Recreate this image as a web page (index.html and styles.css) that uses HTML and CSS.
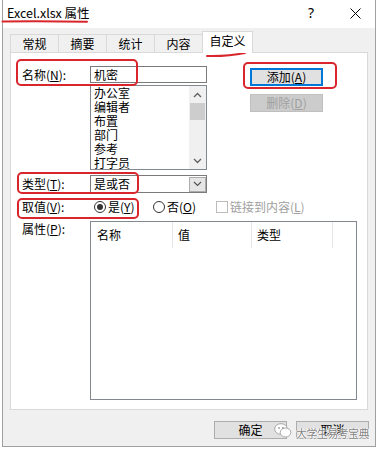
FILE: index.html
```html
<!DOCTYPE html>
<html>
<head>
<meta charset="utf-8">
<link rel="stylesheet" href="styles.css">
</head>
<body>
<div class="window">
  <div class="titlebar">
    <span class="title">Excel.xlsx 属性</span>
    <span class="help">?</span>
    <span class="close"><svg width="11" height="11" viewBox="0 0 11 11"><path d="M0.5 0.5 L10.5 10.5 M10.5 0.5 L0.5 10.5" stroke="#000" stroke-width="1"/></svg></span>
  </div>
  <div class="tabs">
    <div class="tab">常规</div>
    <div class="tab">摘要</div>
    <div class="tab">统计</div>
    <div class="tab">内容</div>
    <div class="tab active">自定义</div>
  </div>
  <div class="panel">
    <div class="main">
      <div class="fields">
        <div class="row name-row">
          <span class="lbl">名称(<u>N</u>):</span>
          <div class="input">机密</div>
        </div>
        <div class="listbox">
          <ul class="items">
            <li>办公室</li>
            <li>编辑者</li>
            <li>布置</li>
            <li>部门</li>
            <li>参考</li>
            <li>打字员</li>
          </ul>
          <div class="vscroll">
            <div class="sb-btn"><svg width="9" height="6" viewBox="0 0 9 6"><path d="M1 5 L4.5 1.5 L8 5" fill="none" stroke="#606060" stroke-width="1.3"/></svg></div>
            <div class="thumb"></div>
            <div class="sb-track"></div>
            <div class="sb-btn"><svg width="9" height="6" viewBox="0 0 9 6"><path d="M1 1 L4.5 4.5 L8 1" fill="none" stroke="#606060" stroke-width="1.3"/></svg></div>
          </div>
        </div>
        <div class="row type-row">
          <span class="lbl">类型(<u>T</u>):</span>
          <div class="combo">
            <span class="combo-text">是或否</span>
            <span class="drop"><svg width="9" height="6" viewBox="0 0 9 6"><path d="M1 1 L4.5 4.5 L8 1" fill="none" stroke="#505050" stroke-width="1.1"/></svg></span>
          </div>
        </div>
      </div>
      <div class="actions">
        <button class="btn btn-focus">添加(<u>A</u>)</button>
        <button class="btn btn-disabled">删除(<u>D</u>)</button>
      </div>
    </div>
    <div class="row value-row">
      <span class="lbl">取值(<u>V</u>):</span>
      <span class="radio"><span class="circle checked"></span><span>是(<u>Y</u>)</span></span>
      <span class="radio"><span class="circle"></span><span>否(<u>O</u>)</span></span>
      <span class="check"><span class="box"></span><span>链接到内容(<u>L</u>)</span></span>
    </div>
    <div class="row props-row">
      <span class="lbl">属性(<u>P</u>):</span>
      <div class="listview">
        <div class="lv-head">
          <span class="col c1">名称</span>
          <span class="col c2">值</span>
          <span class="col c3">类型</span>
        </div>
      </div>
    </div>
  </div>
  <div class="footer">
    <button class="btn">确定</button>
    <button class="btn">取消</button>
  </div>
</div>

<svg class="marks" width="378" height="450" viewBox="0 0 378 450">
  <g fill="none" stroke="#d8262c" stroke-width="2" stroke-linecap="round">
    <path d="M2.5 21.5 Q45 21 87 21.8"/>
    <path d="M207 56 Q228 56.5 245 53"/>
    <rect x="17" y="60" width="120" height="25" rx="4"/>
    <rect x="18" y="173" width="120" height="20" rx="4"/>
    <rect x="18" y="199" width="120" height="19" rx="4"/>
    <rect x="244" y="63" width="92" height="25" rx="4"/>
  </g>
</svg>

<div class="watermark">
  <svg width="18" height="17" viewBox="0 0 18 17">
    <ellipse cx="7" cy="7" rx="6.3" ry="5.3" fill="#fff" stroke="#a8a8a8" stroke-width="1"/>
    <ellipse cx="11.5" cy="10.5" rx="5.3" ry="4.5" fill="#fff" stroke="#a8a8a8" stroke-width="1"/>
    <circle cx="5" cy="6" r="0.9" fill="#9a9a9a"/>
    <circle cx="9" cy="6" r="0.9" fill="#9a9a9a"/>
  </svg>
  <span class="wm-text">大学生易考宝典</span>
</div>
</body>
</html>
```
FILE: styles.css
```css
* { box-sizing: border-box; }
html, body { margin: 0; padding: 0; }
body {
  width: 378px;
  height: 450px;
  position: relative;
  overflow: hidden;
  background: #ffffff;
  font-family: "Noto Sans CJK SC", "Noto Sans", sans-serif;
  font-size: 12px;
  color: #000;
}
u { text-decoration: underline; text-underline-offset: 1px; }

.window {
  margin-left: 2px;
  width: 374px;
  height: 447px;
  background: #f0f0f0;
  border: 1px solid #a0a0a0;
  border-top: 0;
}

.titlebar {
  height: 28px;
  background: #fff;
  display: flex;
  align-items: center;
  padding-left: 4px;
}
.title { font-size: 12.5px; line-height: 16px; margin-top: -2px; }
.help {
  margin-left: auto;
  width: 40px;
  margin-right: 4px;
  text-align: center;
  font-size: 14px;
  line-height: 16px;
  margin-top: -2px;
  font-family: "Noto Sans", sans-serif;
}
.close { width: 40px; display: flex; justify-content: center; margin-top: -2px; }

.tabs {
  height: 24px;
  display: flex;
  align-items: flex-end;
  padding-left: 7px;
}
.tab {
  width: 49px;
  height: 18px;
  margin-right: -1px;
  border: 1px solid #d9d9d9;
  border-bottom: 0;
  background: #f0f0f0;
  text-align: center;
  line-height: 16px;
  padding-top: 1px;
}
.tab.active {
  width: 51px;
  height: 22px;
  margin-bottom: -1px;
  background: #fff;
  position: relative;
  z-index: 1;
  padding-top: 1px;
}

.panel {
  margin-left: 7px;
  width: 358px;
  height: 358px;
  background: #fff;
  border: 1px solid #d9d9d9;
  padding: 13px 0 0 11px;
}
.main { display: flex; }
.fields { width: 185px; }
.row { display: flex; align-items: center; }
.lbl { width: 68px; flex: none; line-height: 16px; white-space: nowrap; }

.name-row { height: 17px; }
.input {
  width: 117px;
  height: 17px;
  border: 1px solid #7a7a7a;
  padding-left: 3px;
  line-height: 15px;
}

.listbox {
  margin: 2px 0 0 68px;
  width: 117px;
  height: 85px;
  border: 1px solid #828790;
  display: flex;
  overflow: hidden;
}
.items {
  list-style: none;
  margin: 0;
  padding: 0 0 0 3px;
  flex: 1;
}
.items li { line-height: 14px; height: 14px; }
.vscroll {
  width: 17px;
  flex: none;
  background: #f0f0f0;
  display: flex;
  flex-direction: column;
}
.sb-btn { height: 17px; display: flex; align-items: center; justify-content: center; }
.thumb { height: 17px; margin: 0 1px; background: #cdcdcd; }
.sb-track { flex: 1; }

.type-row { margin-top: 5px; height: 18px; }
.combo {
  width: 117px;
  height: 18px;
  border: 1px solid #7a7a7a;
  display: flex;
  align-items: center;
  padding: 0 0 0 3px;
}
.combo-text { flex: 1; line-height: 16px; }
.drop {
  width: 17px;
  height: 15px;
  margin-right: 0;
  background: #e5e5e5;
  border: 1px solid #acacac;
  display: flex;
  align-items: center;
  justify-content: center;
}

.actions {
  margin-left: 43px;
  padding-top: 2px;
  display: flex;
  flex-direction: column;
  gap: 8px;
}
.btn {
  width: 73px;
  height: 18px;
  padding: 0;
  margin: 0;
  font-family: inherit;
  font-size: 12px;
  line-height: 16px;
  color: #000;
  background: #e1e1e1;
  border: 1px solid #adadad;
  text-align: center;
}
.btn-focus { border-color: #0078d7; box-shadow: inset 0 0 0 1px #0078d7; }
.btn-disabled { background: #cccccc; border-color: #bfbfbf; color: #a0a0a0; }

.value-row { margin-top: 5px; height: 18px; }
.radio { width: 63px; display: flex; align-items: center; gap: 2px; padding-left: 4px; line-height: 16px; }
.circle {
  width: 12px;
  height: 12px;
  border: 1px solid #333;
  border-radius: 50%;
  background: #fff;
  display: flex;
  align-items: center;
  justify-content: center;
  flex: none;
}
.circle.checked::after {
  content: "";
  width: 6px;
  height: 6px;
  border-radius: 50%;
  background: #333;
}
.radio + .radio { padding-left: 0; }
.check { display: flex; align-items: center; gap: 2px; color: #a0a0a0; line-height: 16px; }
.box { width: 12px; height: 12px; border: 1px solid #bcbcbc; background: #fff; flex: none; }

.props-row { margin-top: 5px; align-items: flex-start; }
.listview {
  width: 267px;
  height: 179px;
  border: 1px solid #828790;
}
.lv-head { display: flex; height: 26px; }
.col { border-right: 1px solid #e5e5e5; line-height: 26px; padding-left: 5px; }
.c1 { width: 82px; padding-left: 6px; }
.c2 { width: 79px; }
.c3 { width: 81px; }

.footer {
  display: flex;
  justify-content: flex-end;
  gap: 9px;
  padding: 11px 6px 0 0;
}

.marks { position: absolute; left: 0; top: 0; pointer-events: none; }

.watermark {
  position: absolute;
  left: 274px;
  top: 420px;
  display: flex;
  align-items: center;
  gap: 4px;
  pointer-events: none;
}
.wm-text {
  font-size: 11px;
  letter-spacing: -0.6px;
  color: #858585;
  line-height: 14px;
  margin-top: 6px;
  text-shadow: 0 0 1px #fff, 0 0 2px #fff, 1px 0 0 #fff, -1px 0 0 #fff;
}
```
